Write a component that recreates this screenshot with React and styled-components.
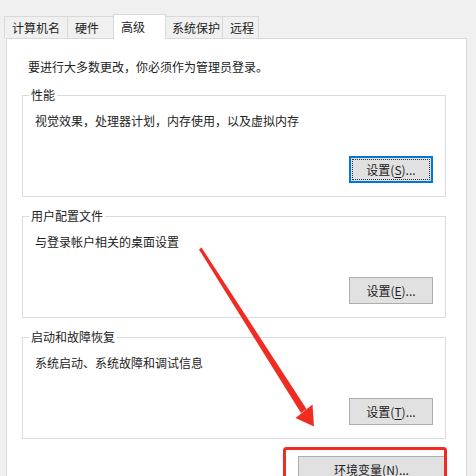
import React from "react";
import styled, { createGlobalStyle } from "styled-components";

const GlobalStyle = createGlobalStyle`
  html, body {
    margin: 0;
    padding: 0;
    background: #f0f0f0;
    overflow: hidden;
  }
  * {
    box-sizing: border-box;
  }
`;

const tabs = [
  { label: "计算机名", width: 64 },
  { label: "硬件", width: 49 },
  { label: "高级", width: 53, active: true },
  { label: "系统保护", width: 59 },
  { label: "远程", width: 37 },
];

const groups = [
  {
    title: "性能",
    text: "视觉效果，处理器计划，内存使用，以及虚拟内存",
    key: "S",
    focused: true,
  },
  { title: "用户配置文件", text: "与登录帐户相关的桌面设置", key: "E" },
  { title: "启动和故障恢复", text: "系统启动、系统故障和调试信息", key: "T" },
];

function App() {
  return (
    <Page>
      <GlobalStyle />
      <TabStrip>
        {tabs.map((t, i) => (
          <Tab
            key={t.label}
            $width={t.width}
            $active={t.active}
            $first={i === 0}
            $afterActive={i > 0 && tabs[i - 1].active}
          >
            {t.label}
          </Tab>
        ))}
      </TabStrip>
      <Panel>
        <Intro>要进行大多数更改，你必须作为管理员登录。</Intro>
        <Groups>
          {groups.map((g) => (
            <GroupBox key={g.title}>
              <GroupTitle>{g.title}</GroupTitle>
              <GroupText>{g.text}</GroupText>
              <ButtonRow>
                <Button $focused={g.focused}>
                  设置(<u>{g.key}</u>)...
                </Button>
              </ButtonRow>
            </GroupBox>
          ))}
        </Groups>
        <FooterRow>
          <Button $wide>
            环境变量(<u>N</u>)...
          </Button>
        </FooterRow>
      </Panel>
      <Annotation viewBox="0 0 476 476">
        <polygon
          points="199,249.5 201.5,247.5 306.5,409 301,413"
          fill="#f02c22"
        />
        <polygon points="295.5,418 312.5,404.5 314,426.5" fill="#f02c22" />
        <rect
          x="284.5"
          y="448.5"
          width="161"
          height="40"
          rx="2"
          fill="none"
          stroke="#f02c22"
          strokeWidth="3"
        />
      </Annotation>
    </Page>
  );
}
export default App;

const Page = styled.div`
  position: relative;
  width: 476px;
  height: 476px;
  overflow: hidden;
  background: #f0f0f0;
  font-family: "Noto Sans CJK SC", "Microsoft YaHei", sans-serif;
  font-size: 12px;
  color: #222;
  display: flex;
  flex-direction: column;
`;

const TabStrip = styled.div`
  display: flex;
  align-items: flex-end;
  height: 38px;
  padding: 14px 0 0 4px;
`;

const Tab = styled.div`
  position: relative;
  width: ${(p) => p.$width}px;
  height: ${(p) => (p.$active ? 25 : 22)}px;
  margin-left: ${(p) => (p.$first || p.$afterActive ? 0 : -1)}px;
  ${(p) => p.$active && "margin: 0 -2px -1px -3px; z-index: 1;"}
  padding-left: 7px;
  display: flex;
  align-items: center;
  border: 1px solid #d9d9d9;
  border-bottom: none;
  background: ${(p) => (p.$active ? "#ffffff" : "#f0f0f0")};
  line-height: 16px;
  white-space: nowrap;
`;

const Panel = styled.div`
  flex: 1;
  margin-left: 6px;
  width: 461px;
  background: #ffffff;
  border: 1px solid #d9d9d9;
  padding: 20px 20px 0 15px;
`;

const Intro = styled.div`
  padding-left: 6px;
  line-height: 16px;
`;

const Groups = styled.div`
  display: flex;
  flex-direction: column;
  gap: 19px;
  margin-top: 20px;
`;

const GroupBox = styled.div`
  border: 1px solid #dcdcdc;
  padding: 0 12px 13px;
`;

const GroupTitle = styled.div`
  width: fit-content;
  margin: -9px 0 0 -6px;
  padding: 0 2px;
  background: #ffffff;
  line-height: 16px;
`;

const GroupText = styled.div`
  margin-top: 10px;
  line-height: 16px;
`;

const ButtonRow = styled.div`
  display: flex;
  justify-content: flex-end;
  margin-top: 27px;
`;

const Button = styled.div`
  width: ${(p) => (p.$wide ? 147 : 84)}px;
  height: 27px;
  display: flex;
  align-items: center;
  justify-content: center;
  background: #e1e1e1;
  border: 1px solid ${(p) => (p.$focused ? "#0078d7" : "#adadad")};
  ${(p) =>
    p.$focused &&
    `box-shadow: inset 0 0 0 1px #0078d7;
     outline: 1px dotted #333;
     outline-offset: -4px;`}
  line-height: 16px;
  white-space: nowrap;

  u {
    text-decoration-thickness: 1px;
    text-underline-offset: 2px;
  }
`;

const FooterRow = styled.div`
  display: flex;
  justify-content: flex-end;
  margin-top: 17px;
  padding-right: 1px;
`;

const Annotation = styled.svg`
  position: absolute;
  top: 0;
  left: 0;
  width: 476px;
  height: 476px;
  pointer-events: none;
`;
